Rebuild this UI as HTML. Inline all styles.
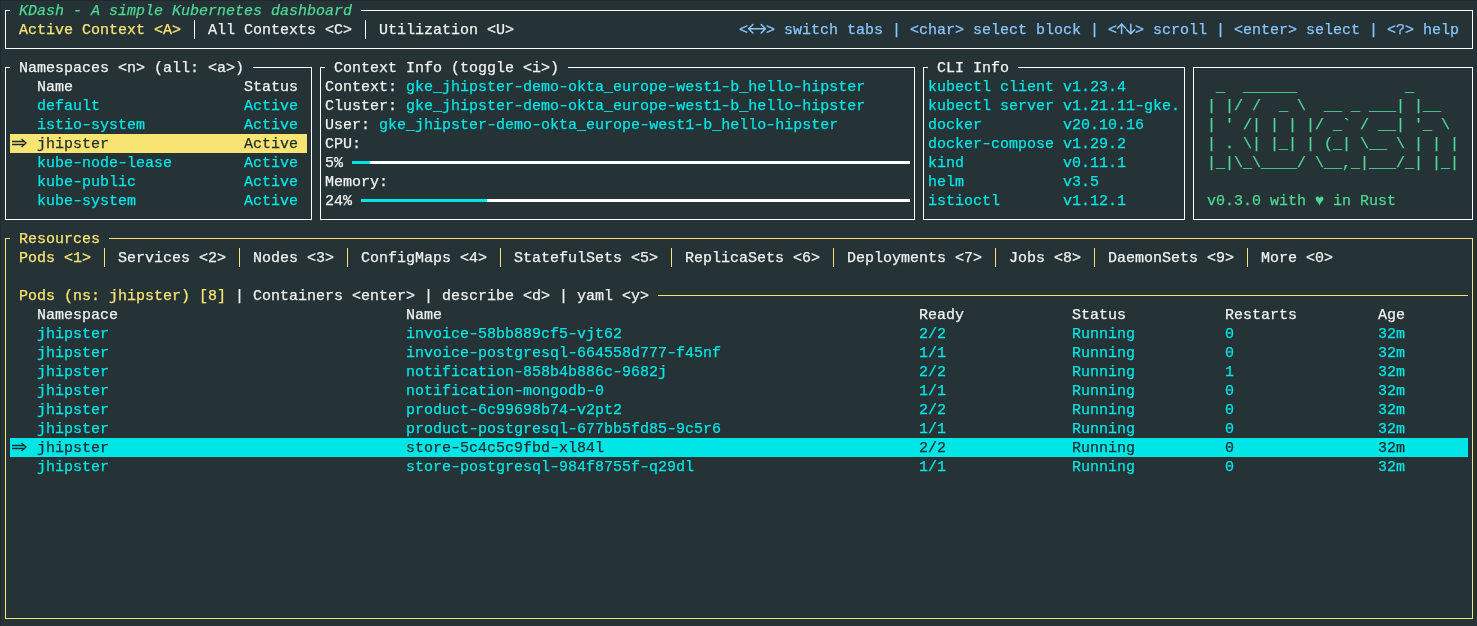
<!DOCTYPE html>
<html><head><meta charset="utf-8"><style>
html,body{margin:0;padding:0;}
body{width:1477px;height:626px;overflow:hidden;background:#253236;position:relative;}
.edge{position:absolute;left:0;top:0;width:1477px;height:626px;box-sizing:border-box;border-left:1px solid #1f2a2e;border-top:1px solid #1f2a2e;}
.t{position:absolute;white-space:pre;will-change:transform;-webkit-text-stroke:0.25px currentColor;font-family:"Liberation Mono",monospace;font-size:15px;line-height:19px;height:19px;}
.l{position:absolute;display:block;}
.h{display:inline-block;font-style:normal;transform:scale(1.3,0.85);}
</style></head><body><div class="edge"></div>
<div class="l" style="left:5px;top:10px;width:1px;height:39px;background:#ffffff"></div>
<div class="l" style="left:1472px;top:10px;width:1px;height:39px;background:#ffffff"></div>
<div class="l" style="left:5px;top:48px;width:1468px;height:1px;background:#ffffff"></div>
<div class="l" style="left:5px;top:10px;width:5px;height:1px;background:#ffffff"></div>
<div class="l" style="left:361px;top:10px;width:1112px;height:1px;background:#ffffff"></div>
<span class="t" style="left:19px;top:2px;color:#4ed894;font-style:italic">KDash - A simple Kubernetes dashboard</span>
<span class="t" style="left:19px;top:21px;color:#f8e473;">Active Context &lt;A&gt;</span>
<div class="l" style="left:194px;top:20px;width:1px;height:19px;background:#ffffff"></div>
<span class="t" style="left:208px;top:21px;color:#f0f2f2;">All Contexts &lt;C&gt;</span>
<div class="l" style="left:365px;top:20px;width:1px;height:19px;background:#ffffff"></div>
<span class="t" style="left:379px;top:21px;color:#f0f2f2;">Utilization &lt;U&gt;</span>
<span class="t" style="left:739px;top:21px;color:#88c6ff;">&lt;  &gt; switch tabs | &lt;char&gt; select block | &lt;  &gt; scroll | &lt;enter&gt; select | &lt;?&gt; help</span>
<svg class="l" style="left:0;top:0" width="1477" height="40"><g fill="none" stroke="#88c6ff" stroke-width="1.5" stroke-linecap="round" stroke-linejoin="round"><path d="M748.8 28.7H765.2M752.9 24.5L748.6 28.7L752.9 33.0M761.2 24.5L765.4 28.7L761.2 33.0"/><path d="M1121.6 24V33.5M1117.5 28.2L1121.6 24L1125.7 28.2"/><path d="M1130.8 24.3V33.6M1126.7 29.7L1130.8 33.8L1134.7 29.7"/></g></svg>
<div class="l" style="left:5px;top:67px;width:1px;height:153px;background:#ffffff"></div>
<div class="l" style="left:311px;top:67px;width:1px;height:153px;background:#ffffff"></div>
<div class="l" style="left:5px;top:219px;width:307px;height:1px;background:#ffffff"></div>
<div class="l" style="left:5px;top:67px;width:5px;height:1px;background:#ffffff"></div>
<div class="l" style="left:253px;top:67px;width:59px;height:1px;background:#ffffff"></div>
<span class="t" style="left:19px;top:59px;color:#f0f2f2;">Namespaces &lt;n&gt; (all: &lt;a&gt;)</span>
<span class="t" style="left:37px;top:78px;color:#f0f2f2;">Name</span>
<span class="t" style="left:244px;top:78px;color:#f0f2f2;">Status</span>
<span class="t" style="left:37px;top:97px;color:#00e6e6;">default</span>
<span class="t" style="left:244px;top:97px;color:#00e6e6;">Active</span>
<span class="t" style="left:37px;top:116px;color:#00e6e6;">istio<i class="h">-</i>system</span>
<span class="t" style="left:244px;top:116px;color:#00e6e6;">Active</span>
<div class="l" style="left:10px;top:134px;width:297px;height:19px;background:#f8e473"></div>
<svg class="l" style="left:10px;top:134px" width="18" height="19" viewBox="0 0 18 19"><path d="M2 7.5H15M2 10.5H15M11.5 5L16 9L11.5 13" fill="none" stroke="#1f2a2f" stroke-width="1.3"/></svg>
<span class="t" style="left:37px;top:135px;color:#1f2a2f;">jhipster</span>
<span class="t" style="left:244px;top:135px;color:#1f2a2f;">Active</span>
<span class="t" style="left:37px;top:154px;color:#00e6e6;">kube<i class="h">-</i>node<i class="h">-</i>lease</span>
<span class="t" style="left:244px;top:154px;color:#00e6e6;">Active</span>
<span class="t" style="left:37px;top:173px;color:#00e6e6;">kube<i class="h">-</i>public</span>
<span class="t" style="left:244px;top:173px;color:#00e6e6;">Active</span>
<span class="t" style="left:37px;top:192px;color:#00e6e6;">kube<i class="h">-</i>system</span>
<span class="t" style="left:244px;top:192px;color:#00e6e6;">Active</span>
<div class="l" style="left:320px;top:67px;width:1px;height:153px;background:#ffffff"></div>
<div class="l" style="left:914px;top:67px;width:1px;height:153px;background:#ffffff"></div>
<div class="l" style="left:320px;top:219px;width:595px;height:1px;background:#ffffff"></div>
<div class="l" style="left:320px;top:67px;width:5px;height:1px;background:#ffffff"></div>
<div class="l" style="left:568px;top:67px;width:347px;height:1px;background:#ffffff"></div>
<span class="t" style="left:334px;top:59px;color:#f0f2f2;">Context Info (toggle &lt;i&gt;)</span>
<span class="t" style="left:325px;top:78px;color:#f0f2f2;">Context:</span>
<span class="t" style="left:406px;top:78px;color:#00e6e6;">gke_jhipster<i class="h">-</i>demo<i class="h">-</i>okta_europe<i class="h">-</i>west1<i class="h">-</i>b_hello<i class="h">-</i>hipster</span>
<span class="t" style="left:325px;top:97px;color:#f0f2f2;">Cluster:</span>
<span class="t" style="left:406px;top:97px;color:#00e6e6;">gke_jhipster<i class="h">-</i>demo<i class="h">-</i>okta_europe<i class="h">-</i>west1<i class="h">-</i>b_hello<i class="h">-</i>hipster</span>
<span class="t" style="left:325px;top:116px;color:#f0f2f2;">User:</span>
<span class="t" style="left:379px;top:116px;color:#00e6e6;">gke_jhipster<i class="h">-</i>demo<i class="h">-</i>okta_europe<i class="h">-</i>west1<i class="h">-</i>b_hello<i class="h">-</i>hipster</span>
<span class="t" style="left:325px;top:135px;color:#f0f2f2;">CPU:</span>
<span class="t" style="left:325px;top:154px;color:#f0f2f2;">5%</span>
<div class="l" style="left:352px;top:161px;width:18px;height:3px;background:#00e6e6"></div>
<div class="l" style="left:370px;top:161px;width:540px;height:3px;background:#ffffff"></div>
<span class="t" style="left:325px;top:173px;color:#f0f2f2;">Memory:</span>
<span class="t" style="left:325px;top:192px;color:#f0f2f2;">24%</span>
<div class="l" style="left:361px;top:199px;width:126px;height:3px;background:#00e6e6"></div>
<div class="l" style="left:487px;top:199px;width:423px;height:3px;background:#ffffff"></div>
<div class="l" style="left:923px;top:67px;width:1px;height:153px;background:#ffffff"></div>
<div class="l" style="left:1184px;top:67px;width:1px;height:153px;background:#ffffff"></div>
<div class="l" style="left:923px;top:219px;width:262px;height:1px;background:#ffffff"></div>
<div class="l" style="left:923px;top:67px;width:5px;height:1px;background:#ffffff"></div>
<div class="l" style="left:1018px;top:67px;width:167px;height:1px;background:#ffffff"></div>
<span class="t" style="left:937px;top:59px;color:#f0f2f2;">CLI Info</span>
<span class="t" style="left:928px;top:78px;color:#00e6e6;">kubectl client</span>
<span class="t" style="left:1063px;top:78px;color:#00e6e6;">v1.23.4</span>
<span class="t" style="left:928px;top:97px;color:#00e6e6;">kubectl server</span>
<span class="t" style="left:1063px;top:97px;color:#00e6e6;">v1.21.11<i class="h">-</i>gke.</span>
<span class="t" style="left:928px;top:116px;color:#00e6e6;">docker</span>
<span class="t" style="left:1063px;top:116px;color:#00e6e6;">v20.10.16</span>
<span class="t" style="left:928px;top:135px;color:#00e6e6;">docker<i class="h">-</i>compose</span>
<span class="t" style="left:1063px;top:135px;color:#00e6e6;">v1.29.2</span>
<span class="t" style="left:928px;top:154px;color:#00e6e6;">kind</span>
<span class="t" style="left:1063px;top:154px;color:#00e6e6;">v0.11.1</span>
<span class="t" style="left:928px;top:173px;color:#00e6e6;">helm</span>
<span class="t" style="left:1063px;top:173px;color:#00e6e6;">v3.5</span>
<span class="t" style="left:928px;top:192px;color:#00e6e6;">istioctl</span>
<span class="t" style="left:1063px;top:192px;color:#00e6e6;">v1.12.1</span>
<div class="l" style="left:1193px;top:67px;width:1px;height:153px;background:#ffffff"></div>
<div class="l" style="left:1472px;top:67px;width:1px;height:153px;background:#ffffff"></div>
<div class="l" style="left:1193px;top:219px;width:280px;height:1px;background:#ffffff"></div>
<div class="l" style="left:1193px;top:67px;width:280px;height:1px;background:#ffffff"></div>
<span class="t" style="left:1207px;top:78px;color:#4ed894;"> _  ______            _     </span>
<span class="t" style="left:1207px;top:97px;color:#4ed894;">| |/ /  _ \  __ _ ___| |__  </span>
<span class="t" style="left:1207px;top:116px;color:#4ed894;">| &#x27; /| | | |/ _` / __| &#x27;_ \ </span>
<span class="t" style="left:1207px;top:135px;color:#4ed894;">| . \| |_| | (_| \__ \ | | |</span>
<span class="t" style="left:1207px;top:154px;color:#4ed894;">|_|\_\____/ \__,_|___/_| |_|</span>
<span class="t" style="left:1207px;top:192px;color:#4ed894;">v0.3.0 with ♥ in Rust</span>
<div class="l" style="left:5px;top:238px;width:1px;height:381px;background:#f8e473"></div>
<div class="l" style="left:1472px;top:238px;width:1px;height:381px;background:#f8e473"></div>
<div class="l" style="left:5px;top:618px;width:1468px;height:1px;background:#f8e473"></div>
<div class="l" style="left:5px;top:238px;width:5px;height:1px;background:#f8e473"></div>
<div class="l" style="left:109px;top:238px;width:1364px;height:1px;background:#f8e473"></div>
<span class="t" style="left:19px;top:230px;color:#f8e473;">Resources</span>
<span class="t" style="left:19px;top:249px;color:#f8e473;">Pods &lt;1&gt;</span>
<span class="t" style="left:118px;top:249px;color:#f0f2f2;">Services &lt;2&gt;</span>
<div class="l" style="left:104px;top:248px;width:1px;height:19px;background:#f8e473"></div>
<span class="t" style="left:253px;top:249px;color:#f0f2f2;">Nodes &lt;3&gt;</span>
<div class="l" style="left:239px;top:248px;width:1px;height:19px;background:#f8e473"></div>
<span class="t" style="left:361px;top:249px;color:#f0f2f2;">ConfigMaps &lt;4&gt;</span>
<div class="l" style="left:347px;top:248px;width:1px;height:19px;background:#f8e473"></div>
<span class="t" style="left:514px;top:249px;color:#f0f2f2;">StatefulSets &lt;5&gt;</span>
<div class="l" style="left:500px;top:248px;width:1px;height:19px;background:#f8e473"></div>
<span class="t" style="left:685px;top:249px;color:#f0f2f2;">ReplicaSets &lt;6&gt;</span>
<div class="l" style="left:671px;top:248px;width:1px;height:19px;background:#f8e473"></div>
<span class="t" style="left:847px;top:249px;color:#f0f2f2;">Deployments &lt;7&gt;</span>
<div class="l" style="left:833px;top:248px;width:1px;height:19px;background:#f8e473"></div>
<span class="t" style="left:1009px;top:249px;color:#f0f2f2;">Jobs &lt;8&gt;</span>
<div class="l" style="left:995px;top:248px;width:1px;height:19px;background:#f8e473"></div>
<span class="t" style="left:1108px;top:249px;color:#f0f2f2;">DaemonSets &lt;9&gt;</span>
<div class="l" style="left:1094px;top:248px;width:1px;height:19px;background:#f8e473"></div>
<span class="t" style="left:1261px;top:249px;color:#f0f2f2;">More &lt;0&gt;</span>
<div class="l" style="left:1247px;top:248px;width:1px;height:19px;background:#f8e473"></div>
<span class="t" style="left:19px;top:287px;color:#f8e473;">Pods (ns: jhipster) [8]</span>
<span class="t" style="left:226px;top:287px;color:#f0f2f2;"> | Containers &lt;enter&gt; | describe &lt;d&gt; | yaml &lt;y&gt;</span>
<div class="l" style="left:658px;top:295px;width:810px;height:1px;background:#f8e473"></div>
<span class="t" style="left:37px;top:306px;color:#f0f2f2;">Namespace</span>
<span class="t" style="left:406px;top:306px;color:#f0f2f2;">Name</span>
<span class="t" style="left:919px;top:306px;color:#f0f2f2;">Ready</span>
<span class="t" style="left:1072px;top:306px;color:#f0f2f2;">Status</span>
<span class="t" style="left:1225px;top:306px;color:#f0f2f2;">Restarts</span>
<span class="t" style="left:1378px;top:306px;color:#f0f2f2;">Age</span>
<span class="t" style="left:37px;top:325px;color:#00e6e6;">jhipster</span>
<span class="t" style="left:406px;top:325px;color:#00e6e6;">invoice<i class="h">-</i>58bb889cf5<i class="h">-</i>vjt62</span>
<span class="t" style="left:919px;top:325px;color:#00e6e6;">2/2</span>
<span class="t" style="left:1072px;top:325px;color:#00e6e6;">Running</span>
<span class="t" style="left:1225px;top:325px;color:#00e6e6;">0</span>
<span class="t" style="left:1378px;top:325px;color:#00e6e6;">32m</span>
<span class="t" style="left:37px;top:344px;color:#00e6e6;">jhipster</span>
<span class="t" style="left:406px;top:344px;color:#00e6e6;">invoice<i class="h">-</i>postgresql<i class="h">-</i>664558d777<i class="h">-</i>f45nf</span>
<span class="t" style="left:919px;top:344px;color:#00e6e6;">1/1</span>
<span class="t" style="left:1072px;top:344px;color:#00e6e6;">Running</span>
<span class="t" style="left:1225px;top:344px;color:#00e6e6;">0</span>
<span class="t" style="left:1378px;top:344px;color:#00e6e6;">32m</span>
<span class="t" style="left:37px;top:363px;color:#00e6e6;">jhipster</span>
<span class="t" style="left:406px;top:363px;color:#00e6e6;">notification<i class="h">-</i>858b4b886c<i class="h">-</i>9682j</span>
<span class="t" style="left:919px;top:363px;color:#00e6e6;">2/2</span>
<span class="t" style="left:1072px;top:363px;color:#00e6e6;">Running</span>
<span class="t" style="left:1225px;top:363px;color:#00e6e6;">1</span>
<span class="t" style="left:1378px;top:363px;color:#00e6e6;">32m</span>
<span class="t" style="left:37px;top:382px;color:#00e6e6;">jhipster</span>
<span class="t" style="left:406px;top:382px;color:#00e6e6;">notification<i class="h">-</i>mongodb<i class="h">-</i>0</span>
<span class="t" style="left:919px;top:382px;color:#00e6e6;">1/1</span>
<span class="t" style="left:1072px;top:382px;color:#00e6e6;">Running</span>
<span class="t" style="left:1225px;top:382px;color:#00e6e6;">0</span>
<span class="t" style="left:1378px;top:382px;color:#00e6e6;">32m</span>
<span class="t" style="left:37px;top:401px;color:#00e6e6;">jhipster</span>
<span class="t" style="left:406px;top:401px;color:#00e6e6;">product<i class="h">-</i>6c99698b74<i class="h">-</i>v2pt2</span>
<span class="t" style="left:919px;top:401px;color:#00e6e6;">2/2</span>
<span class="t" style="left:1072px;top:401px;color:#00e6e6;">Running</span>
<span class="t" style="left:1225px;top:401px;color:#00e6e6;">0</span>
<span class="t" style="left:1378px;top:401px;color:#00e6e6;">32m</span>
<span class="t" style="left:37px;top:420px;color:#00e6e6;">jhipster</span>
<span class="t" style="left:406px;top:420px;color:#00e6e6;">product<i class="h">-</i>postgresql<i class="h">-</i>677bb5fd85<i class="h">-</i>9c5r6</span>
<span class="t" style="left:919px;top:420px;color:#00e6e6;">1/1</span>
<span class="t" style="left:1072px;top:420px;color:#00e6e6;">Running</span>
<span class="t" style="left:1225px;top:420px;color:#00e6e6;">0</span>
<span class="t" style="left:1378px;top:420px;color:#00e6e6;">32m</span>
<div class="l" style="left:10px;top:438px;width:1458px;height:19px;background:#00e6e6"></div>
<svg class="l" style="left:10px;top:438px" width="18" height="19" viewBox="0 0 18 19"><path d="M2 7.5H15M2 10.5H15M11.5 5L16 9L11.5 13" fill="none" stroke="#1f2a2f" stroke-width="1.3"/></svg>
<span class="t" style="left:37px;top:439px;color:#1f2a2f;">jhipster</span>
<span class="t" style="left:406px;top:439px;color:#1f2a2f;">store<i class="h">-</i>5c4c5c9fbd<i class="h">-</i>xl84l</span>
<span class="t" style="left:919px;top:439px;color:#1f2a2f;">2/2</span>
<span class="t" style="left:1072px;top:439px;color:#1f2a2f;">Running</span>
<span class="t" style="left:1225px;top:439px;color:#1f2a2f;">0</span>
<span class="t" style="left:1378px;top:439px;color:#1f2a2f;">32m</span>
<span class="t" style="left:37px;top:458px;color:#00e6e6;">jhipster</span>
<span class="t" style="left:406px;top:458px;color:#00e6e6;">store<i class="h">-</i>postgresql<i class="h">-</i>984f8755f<i class="h">-</i>q29dl</span>
<span class="t" style="left:919px;top:458px;color:#00e6e6;">1/1</span>
<span class="t" style="left:1072px;top:458px;color:#00e6e6;">Running</span>
<span class="t" style="left:1225px;top:458px;color:#00e6e6;">0</span>
<span class="t" style="left:1378px;top:458px;color:#00e6e6;">32m</span>
</body></html>
